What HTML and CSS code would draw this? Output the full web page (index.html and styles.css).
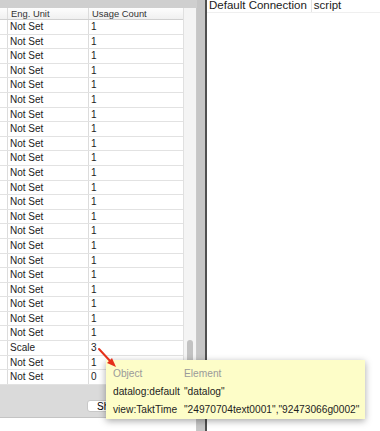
FILE: index.html
```html
<!DOCTYPE html>
<html lang="en">

<head>
    <meta charset="UTF-8">
    <meta name="viewport" content="width=device-width, initial-scale=1.0">
    <title>Tag usage</title>
    <link rel="stylesheet" href="styles.css">
</head>

<body>
    <div class="window">
        <section class="left-pane">
            <div class="top-bar"></div>
            <div class="table-area">
                <div class="usage-table">
                    <div class="row head">
                        <span class="cell lead"></span>
                        <span class="cell">Eng. Unit</span>
                        <span class="cell">Usage Count</span>
                    </div>
                    <div id="rows"></div>
                </div>
                <div class="scroll-track">
                    <div class="scroll-thumb"></div>
                </div>
            </div>
            <div class="footer">
                <button class="btn">Show</button>
            </div>
            <div class="bottom"></div>
        </section>
        <div class="splitter"></div>
        <section class="right-pane">
            <div class="tabs">
                <span class="tab">Default Connection</span>
                <span class="tab">script</span>
            </div>
        </section>
    </div>

    <div class="tooltip">
        <span class="tip-head">Object</span>
        <span class="tip-head">Element</span>
        <span>datalog:default</span>
        <span>"datalog"</span>
        <span>view:TaktTime</span>
        <span>"24970704text0001","92473066g0002"</span>
    </div>

    <svg class="arrow" width="24" height="24" viewBox="0 0 24 24">
        <line x1="2" y1="2" x2="14" y2="15" stroke="#e5311b" stroke-width="2" stroke-linecap="round" />
        <polygon points="19,20 10,16 15,11" fill="#e5311b" />
    </svg>

    <script>
        (function () {
            let units = []
            for (let i = 0; i < 22; i++) {
                units.push(['Not Set', '1'])
            }
            units.push(['Scale', '3'])
            units.push(['Not Set', '1'])
            units.push(['Not Set', '0'])

            let rows = document.querySelector('#rows')
            units.forEach(u => {
                let row = document.createElement('div')
                row.className = 'row'
                row.innerHTML = '<span class="cell lead"></span><span class="cell">' + u[0] + '</span><span class="cell">' + u[1] + '</span>'
                rows.appendChild(row)
            })
        })()
    </script>
</body>

</html>
```
FILE: styles.css
```css
body {
    margin: 0;
    font-family: 'Liberation Sans', Arial, sans-serif;
    color: #1c1c1c;
    background-color: #fff;
    overflow: hidden;
}

.window {
    display: flex;
    width: 380px;
    height: 431px;
}

.left-pane {
    width: 197px;
    display: flex;
    flex-direction: column;
    background-color: #fff;
}

.top-bar {
    height: 8px;
    background-color: #cfcfcf;
}

.table-area {
    display: flex;
    height: 377px;
}

.usage-table {
    width: 183px;
    background-color: #fff;
}

.row {
    display: grid;
    grid-template-columns: 7px 81px 1fr;
    height: 14.6px;
    font-size: 10px;
    line-height: 14px;
    border-bottom: 1px solid #e2e2e2;
    box-sizing: border-box;
}

.row .cell {
    padding-left: 2px;
    border-left: 1px solid #dcdcdc;
    white-space: nowrap;
    overflow: hidden;
}

.row .cell.lead {
    border-left: none;
    padding: 0;
}

.row.head {
    height: 12px;
    font-size: 9.4px;
    line-height: 12px;
    color: #333;
    background: linear-gradient(#fdfdfd, #f0f0f0);
    border-bottom: 1px solid #d0d0d0;
}

.row.head .cell {
    padding-left: 3px;
}

.scroll-track {
    width: 14px;
    background-color: #f4f4f4;
    border-left: 1px solid #e0e0e0;
    border-right: 1px solid #c9c9c9;
    box-sizing: border-box;
    display: flex;
    flex-direction: column;
    align-items: center;
    padding-top: 332px;
}

.scroll-thumb {
    width: 6px;
    height: 40px;
    border-radius: 3px;
    background-color: #c2c2c2;
}

.footer {
    height: 33px;
    background-color: #dadada;
    border-bottom: 1px solid #c4c4c4;
    border-right: 1px solid #c9c9c9;
    padding: 11px 0 0 87px;
    box-sizing: border-box;
}

.btn {
    width: 60px;
    height: 12px;
    padding: 0 0 0 9px;
    text-align: left;
    font-family: 'Liberation Sans', Arial, sans-serif;
    font-size: 10px;
    line-height: 12px;
    background-color: #fff;
    border: 1px solid #c8c8c8;
    border-radius: 3px;
}

.bottom {
    flex: 1;
    border-right: 1px solid #c9c9c9;
}

.splitter {
    width: 8px;
    background-color: #c6c6c6;
    border-right: 2px solid #505050;
}

.right-pane {
    flex: 1;
    background-color: #fff;
}

.tabs {
    display: flex;
    height: 12px;
    border-bottom: 1px solid #efefef;
    font-size: 11.5px;
    line-height: 11px;
}

.tab {
    padding: 0 4px 0 2px;
}

.tab:first-child {
    border-right: 1px solid #e4e4e4;
}

.tooltip {
    position: absolute;
    left: 106px;
    top: 360px;
    width: 259px;
    height: 59px;
    box-sizing: border-box;
    padding: 4px 0 0 7px;
    display: grid;
    grid-template-columns: 71px 1fr;
    grid-auto-rows: 18px;
    align-items: center;
    font-size: 10.2px;
    color: #1e1e1e;
    background-color: #fdfdc8;
    box-shadow: 0 2px 7px rgba(0, 0, 0, 0.35);
    white-space: nowrap;
}

.tip-head {
    color: #9a9a9a;
}

.arrow {
    position: absolute;
    left: 97px;
    top: 347px;
}
```
